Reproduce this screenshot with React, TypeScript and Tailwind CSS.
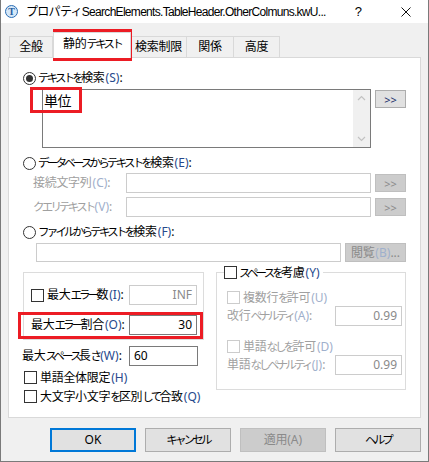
import React from "react"

const font = "font-['Noto_Sans','Noto_Sans_CJK_JP',sans-serif]"

// Japanese text: kana are set narrower than kanji, as in the Windows UI font
function J({ t }: { t: string }) {
  const parts = t.split(/([\u3040-\u30ff]+)/)
  return (
    <>
      {parts.map((p, i) =>
        p === "" ? null : /[\u3040-\u30ff]/.test(p) ? (
          <span key={i} className="text-[11.5px] tracking-[-2.8px]">
            {p}
          </span>
        ) : (
          <span key={i} className="tracking-[-0.3px]">
            {p}
          </span>
        )
      )}
    </>
  )
}

function Mn({ c, dim }: { c: string; dim?: boolean }) {
  return <span className={(dim ? "text-[#9fb0cc]" : "text-[#26498c]") + " ml-[1px]"}>({c})</span>
}

function Radio({ on }: { on?: boolean }) {
  return (
    <span className="w-[13px] h-[13px] rounded-full border border-[#333333] bg-white flex items-center justify-center shrink-0">
      {on && <span className="w-[7px] h-[7px] rounded-full bg-[#333333]" />}
    </span>
  )
}

function Check({ disabled }: { disabled?: boolean }) {
  return (
    <span
      className={
        disabled
          ? "w-[13px] h-[13px] border border-[#cccccc] bg-white shrink-0"
          : "w-[13px] h-[13px] border border-[#333333] bg-white shrink-0"
      }
    />
  )
}

function SmallBtn({ label, disabled, w }: { label: string; disabled?: boolean; w: string }) {
  return (
    <div
      className={
        (disabled
          ? "bg-[#cccccc] border-[#bfbfbf] text-[#8a8a8a] "
          : "bg-[#e1e1e1] border-[#adadad] text-[#1a2e6b] ") +
        w +
        " h-[18px] border flex items-center justify-center text-[11px] leading-none shrink-0"
      }
    >
      {label}
    </div>
  )
}

function Chevron({ up }: { up?: boolean }) {
  return (
    <svg width="9" height="6" viewBox="0 0 9 6" className="text-[#c2c2c2]">
      <path d={up ? "M1 5 L4.5 1.5 L8 5" : "M1 1 L4.5 4.5 L8 1"} fill="none" stroke="currentColor" strokeWidth="1.2" />
    </svg>
  )
}

const tabs = ["全般", "静的テキスト", "検索制限", "関係", "高度"]
const tabW = ["w-[44px]", "w-[78px]", "w-[57px]", "w-[48px]", "w-[47px]"]

export default function App() {
  return (
    <div className={"relative w-[429px] h-[462px] bg-[#f0f0f0] border-x border-b border-[#7a7a7a] flex flex-col text-[12px] leading-none text-black " + font}>
      {/* title bar */}
      <div className="h-[23px] bg-white flex items-center shrink-0">
        <div className="ml-[4px] w-[13px] h-[13px] rounded-full border border-[#2a6db5] bg-[#d6e8f8] flex items-center justify-center shrink-0">
          <span className="text-[10px] font-bold text-[#2a5fa0] leading-none font-['Liberation_Serif',serif]">T</span>
        </div>
        <span className="ml-[8px] whitespace-nowrap tracking-[-0.7px] font-['Liberation_Sans','Noto_Sans_CJK_JP',sans-serif]">
          プロパティSearchElements.TableHeader.OtherColmuns.kwU...
        </span>
        <span className="ml-auto text-[13px] font-['Liberation_Sans',sans-serif]">?</span>
        <svg width="10" height="10" viewBox="0 0 10 10" className="ml-[39px] mr-[17px]">
          <path d="M0.5 0.5 L9.5 9.5 M9.5 0.5 L0.5 9.5" stroke="#111" strokeWidth="1" />
        </svg>
      </div>

      <div className="flex-1 px-[7px]">
        {/* tabs */}
        <div className="mt-[10px] h-[24px] flex items-end pl-[1px]">
          {tabs.map((t, i) =>
            i === 1 ? (
              <div
                key={t}
                className={tabW[i] + " h-[26px] -mb-px bg-white border border-b-0 border-[#d9d9d9] relative z-10 flex items-center justify-center pb-[3px]"}
              >
                <J t={t} />
              </div>
            ) : (
              <div
                key={t}
                className={tabW[i] + " h-[21px] bg-[#f0f0f0] border border-b-0 border-[#d9d9d9] -ml-px first:ml-0 flex items-center justify-center"}
              >
                <J t={t} />
              </div>
            )
          )}
        </div>

        {/* panel */}
        <div className="h-[361px] bg-white border border-[#d9d9d9] relative">
          {/* search text */}
          <div className="mt-[12px] h-[16px] flex items-center pl-[14px] gap-[2px]">
            <Radio on />
            <span className="whitespace-nowrap">
              <J t="テキストを検索" />
              <Mn c="S" />:
            </span>
          </div>
          <div className="mt-[3px] flex pl-[33px]">
            <div className="w-[329px] h-[59px] border border-[#7a7a7a] flex">
              <div className="flex-1 pl-[1px] pt-[4px] text-[14px] tracking-[-0.5px]">単位</div>
              <div className="w-[17px] bg-[#f0f0f0] flex flex-col items-center justify-between py-[5px]">
                <Chevron up />
                <Chevron />
              </div>
            </div>
            <div className="ml-[4px] mt-[1px]">
              <SmallBtn label=">>" w="w-[31px]" />
            </div>
          </div>

          {/* database */}
          <div className="mt-[7px] h-[16px] flex items-center pl-[14px] gap-[2px]">
            <Radio />
            <span className="whitespace-nowrap">
              <J t="データベースからテキストを検索" />
              <Mn c="E" />:
            </span>
          </div>
          <div className="mt-[2px] h-[20px] flex items-center pl-[24px] text-[#a0a0a0]">
            <span className="w-[93px] whitespace-nowrap">
              <J t="接続文字列" />
              <Mn c="C" dim />:
            </span>
            <div className="w-[245px] h-[20px] border border-[#cccccc] bg-white" />
            <div className="ml-[4px]">
              <SmallBtn label=">>" w="w-[31px]" disabled />
            </div>
          </div>
          <div className="mt-[4px] h-[20px] flex items-center pl-[24px] text-[#a0a0a0]">
            <span className="w-[93px] whitespace-nowrap">
              <J t="クエリテキスト" />
              <Mn c="V" dim />:
            </span>
            <div className="w-[245px] h-[20px] border border-[#cccccc] bg-white" />
            <div className="ml-[4px]">
              <SmallBtn label=">>" w="w-[31px]" disabled />
            </div>
          </div>

          {/* file */}
          <div className="mt-[7px] h-[16px] flex items-center pl-[14px] gap-[2px]">
            <Radio />
            <span className="whitespace-nowrap">
              <J t="ファイルからテキストを検索" />
              <Mn c="F" />:
            </span>
          </div>
          <div className="mt-[3px] flex items-center pl-[27px]">
            <div className="w-[305px] h-[19px] border border-[#cccccc] bg-white" />
            <div className="ml-[4px] w-[61px] h-[19px] bg-[#cccccc] border border-[#bfbfbf] text-[#8a8a8a] flex items-center justify-center whitespace-nowrap">
              <J t="閲覧" />
              <Mn c="B" dim />...
            </div>
          </div>

          {/* lower section */}
          <div className="mt-[10px] flex pl-[14px]">
            {/* left column */}
            <div className="w-[181px] relative">
              <div className="h-[68px] border border-[#dcdcdc] pl-[7px] pr-[6px]">
                <div className="mt-[12px] h-[20px] flex items-center">
                  <Check />
                  <span className="ml-[3px] whitespace-nowrap">
                    <J t="最大エラー数" />
                    <Mn c="I" />:
                  </span>
                  <div className="ml-auto w-[68px] h-[20px] border border-[#cccccc] bg-white flex items-center justify-end pr-[4px] text-[#8a8a8a]">
                    INF
                  </div>
                </div>
                <div className="mt-[10px] h-[20px] flex items-center">
                  <span className="whitespace-nowrap">
                    <J t="最大エラー割合" />
                    <Mn c="O" />:
                  </span>
                  <div className="ml-auto w-[68px] h-[20px] border border-[#7a7a7a] bg-white flex items-center justify-end pr-[4px]">
                    30
                  </div>
                </div>
              </div>
              <div className="absolute left-[-5px] top-[40px] w-[185px] h-[27px] border-[3px] border-[#ec1c24]" />

              <div className="mt-[6px] h-[20px] flex items-center -ml-px pr-[6px]">
                <span className="whitespace-nowrap">
                  <J t="最大スペース長さ" />
                  <Mn c="W" />:
                </span>
                <div className="ml-auto w-[69px] h-[20px] border border-[#7a7a7a] bg-white flex items-center pl-[4px]">
                  60
                </div>
              </div>
              <div className="mt-[5px] h-[13px] flex items-center ml-px">
                <Check />
                <span className="ml-[3px] whitespace-nowrap">
                  <J t="単語全体限定" />
                  <Mn c="H" />
                </span>
              </div>
              <div className="mt-[6px] h-[13px] flex items-center ml-px">
                <Check />
                <span className="ml-[3px] whitespace-nowrap">
                  <J t="大文字小文字を区別して合致" />
                  <Mn c="Q" />
                </span>
              </div>
            </div>

            {/* right column */}
            <div className="ml-[12px] w-[190px] h-[118px] border border-[#dcdcdc] relative pl-[10px] pr-[3px]">
              <div className="absolute left-[7px] top-[-7px] h-[13px] flex items-center bg-white pr-[3px]">
                <Check />
                <span className="ml-[2px] whitespace-nowrap">
                  <J t="スペースを考慮" />
                  <Mn c="Y" />
                </span>
              </div>
              <div className="mt-[18px] h-[13px] flex items-center text-[#a0a0a0]">
                <Check disabled />
                <span className="ml-[3px] whitespace-nowrap">
                  <J t="複数行を許可" />
                  <Mn c="U" dim />
                </span>
              </div>
              <div className="mt-[2px] h-[20px] flex items-center text-[#a0a0a0]">
                <span className="whitespace-nowrap">
                  <J t="改行ペナルティ" />
                  <Mn c="A" dim />:
                </span>
                <div className="ml-auto w-[67px] h-[20px] border border-[#cccccc] bg-white flex items-center justify-end pr-[4px] text-[#8a8a8a]">
                  0.99
                </div>
              </div>
              <div className="mt-[14px] h-[13px] flex items-center text-[#a0a0a0]">
                <Check disabled />
                <span className="ml-[3px] whitespace-nowrap">
                  <J t="単語なしを許可" />
                  <Mn c="D" dim />
                </span>
              </div>
              <div className="mt-[2px] h-[20px] flex items-center text-[#a0a0a0]">
                <span className="whitespace-nowrap">
                  <J t="単語なしペナルティ" />
                  <Mn c="J" dim />:
                </span>
                <div className="ml-auto w-[67px] h-[20px] border border-[#cccccc] bg-white flex items-center justify-end pr-[4px] text-[#8a8a8a]">
                  0.99
                </div>
              </div>
            </div>
          </div>

          {/* red box around 単位 */}
          <div className="absolute left-[21px] top-[29px] w-[52px] h-[26px] border-[3px] border-[#ec1c24]" />
        </div>

        {/* buttons */}
        <div className="mt-[10px] flex justify-end gap-[9px]">
          <div className="w-[86px] h-[24px] bg-[#e1e1e1] border-2 border-[#0078d7] flex items-center justify-center">OK</div>
          <div className="w-[86px] h-[24px] bg-[#e1e1e1] border border-[#adadad] flex items-center justify-center">
            <J t="キャンセル" />
          </div>
          <div className="w-[86px] h-[24px] bg-[#cccccc] border border-[#bfbfbf] text-[#8a8a8a] flex items-center justify-center">
            <J t="適用" />
            (A)
          </div>
          <div className="w-[86px] h-[24px] bg-[#e1e1e1] border border-[#adadad] flex items-center justify-center">
            <J t="ヘルプ" />
          </div>
        </div>
      </div>

      {/* red box around selected tab */}
      <div className="absolute left-[52px] top-[29px] w-[79px] h-[32px] border-[3px] border-[#ec1c24] pointer-events-none" />
    </div>
  )
}
